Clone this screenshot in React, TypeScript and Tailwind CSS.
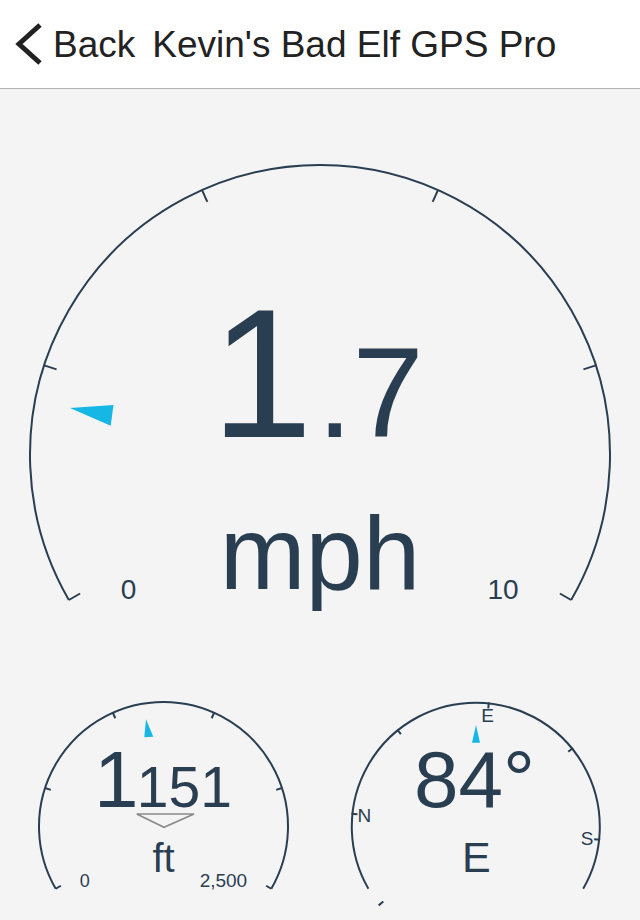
const NAVY = "#2a3e51";
const BLUE = "#17b7e5";

function pt(cx: number, cy: number, r: number, deg: number) {
    const a = (deg * Math.PI) / 180;
    return [cx + r * Math.cos(a), cy - r * Math.sin(a)];
}

// 240 degree arc, open at the bottom, with inward ticks
function Dial({ cx, cy, r, tick, width, ticks, endTicks }: { cx: number; cy: number; r: number; tick: number; width: number; ticks: number[]; endTicks: boolean }) {
    const [sx, sy] = pt(cx, cy, r, 210);
    const [ex, ey] = pt(cx, cy, r, -30);
    const all = endTicks ? [210, ...ticks, -30] : ticks;
    return (
        <g stroke={NAVY} strokeWidth={width} fill="none">
            <path d={`M ${sx} ${sy} A ${r} ${r} 0 1 1 ${ex} ${ey}`} />
            {all.map((d) => {
                const [x1, y1] = pt(cx, cy, r, d);
                const [x2, y2] = pt(cx, cy, r - tick, d);
                return <line key={d} x1={x1} y1={y1} x2={x2} y2={y2} />;
            })}
        </g>
    );
}

function SpeedGauge() {
    return (
        <svg className="block w-[640px] h-[551px]" viewBox="0 89 640 551">
            <Dial cx={320} cy={455} r={290} tick={13} width={2} ticks={[162, 114, 66, 18]} endTicks />
            <polygon points="70,408 113.5,405 110.7,425.7" fill={BLUE} />
            <g fill={NAVY}>
                <text x={211} y={437} fontSize={183}>1</text>
                <text x={317} y={437} fontSize={128}>.7</text>
                <text x={320} y={589} fontSize={103} textAnchor="middle">mph</text>
                <text x={128.5} y={599} fontSize={28} textAnchor="middle">0</text>
                <text x={503} y={599} fontSize={28} textAnchor="middle">10</text>
            </g>
        </svg>
    );
}

function AltitudeGauge() {
    return (
        <svg className="block w-[320px] h-[280px]" viewBox="0 640 320 280">
            <Dial cx={163.5} cy={826.5} r={124.5} tick={6} width={2} ticks={[162, 114, 66, 18]} endTicks />
            <polygon points="146,719.3 153.3,736.7 144.3,737.3" fill={BLUE} />
            <g fill={NAVY}>
                <text x={94} y={807} fontSize={80}>1</text>
                <text x={136.8} y={807} fontSize={57}>151</text>
                <text x={163.5} y={871.7} fontSize={40} textAnchor="middle">ft</text>
                <text x={84.7} y={887.3} fontSize={18} textAnchor="middle">0</text>
                <text x={223.4} y={887.3} fontSize={19} textAnchor="middle">2,500</text>
            </g>
            <polygon points="136.7,814 194,814 164,827.3" fill="none" stroke="#8a8a8a" strokeWidth={1.6} />
        </svg>
    );
}

function CompassGauge() {
    const cx = 475.8;
    const cy = 826.7;
    const r = 124;
    const heading = 84;
    const labels = [
        { b: 0, t: "N" },
        { b: 90, t: "E" },
        { b: 180, t: "S" },
    ];
    return (
        <svg className="block w-[320px] h-[280px]" viewBox="320 640 320 280">
            <Dial cx={cx} cy={cy} r={r} tick={6} width={2} ticks={[]} endTicks={false} />
            <g stroke={NAVY} strokeWidth={2}>
                {[0, 45, 90, 135, 180, 315].map((b) => {
                    const d = 90 - (b - heading);
                    const [x1, y1] = pt(cx, cy, r + 1, d);
                    const [x2, y2] = pt(cx, cy, r - 5, d);
                    return <line key={b} x1={x1} y1={y1} x2={x2} y2={y2} />;
                })}
            </g>
            <g fill={NAVY}>
                {labels.map((l) => {
                    const [x, y] = pt(cx, cy, 112, 90 - (l.b - heading));
                    return (
                        <text key={l.t} x={x} y={y + 6.7} fontSize={19} textAnchor="middle">
                            {l.t}
                        </text>
                    );
                })}
                <text x={414} y={807.3} fontSize={80}>84°</text>
                <text x={476.3} y={871.7} fontSize={43} textAnchor="middle">E</text>
            </g>
            <polygon points="476,725 480,742.7 472,742.7" fill={BLUE} />
        </svg>
    );
}

export default function App() {
    return (
        <div className="w-[640px] h-[920px] overflow-hidden bg-[#f4f4f4] font-['Liberation_Sans',Arial,sans-serif] flex flex-col">
            {/* Nav bar */}
            <div className="h-[89px] shrink-0 bg-white border-b border-[#b2b2b2] flex items-center text-[#222222] text-[37px] leading-none">
                <svg className="ml-[14px] w-[30px] h-[44px]" viewBox="0 0 30 44">
                    <polyline points="26,3 5,22 26,41" fill="none" stroke="#222222" strokeWidth={5} />
                </svg>
                <span className="ml-[9px]">Back</span>
                <span className="ml-[17px]">Kevin's Bad Elf GPS Pro</span>
            </div>

            <SpeedGauge />

            <div className="grid grid-cols-2">
                <AltitudeGauge />
                <CompassGauge />
            </div>
        </div>
    );
}
